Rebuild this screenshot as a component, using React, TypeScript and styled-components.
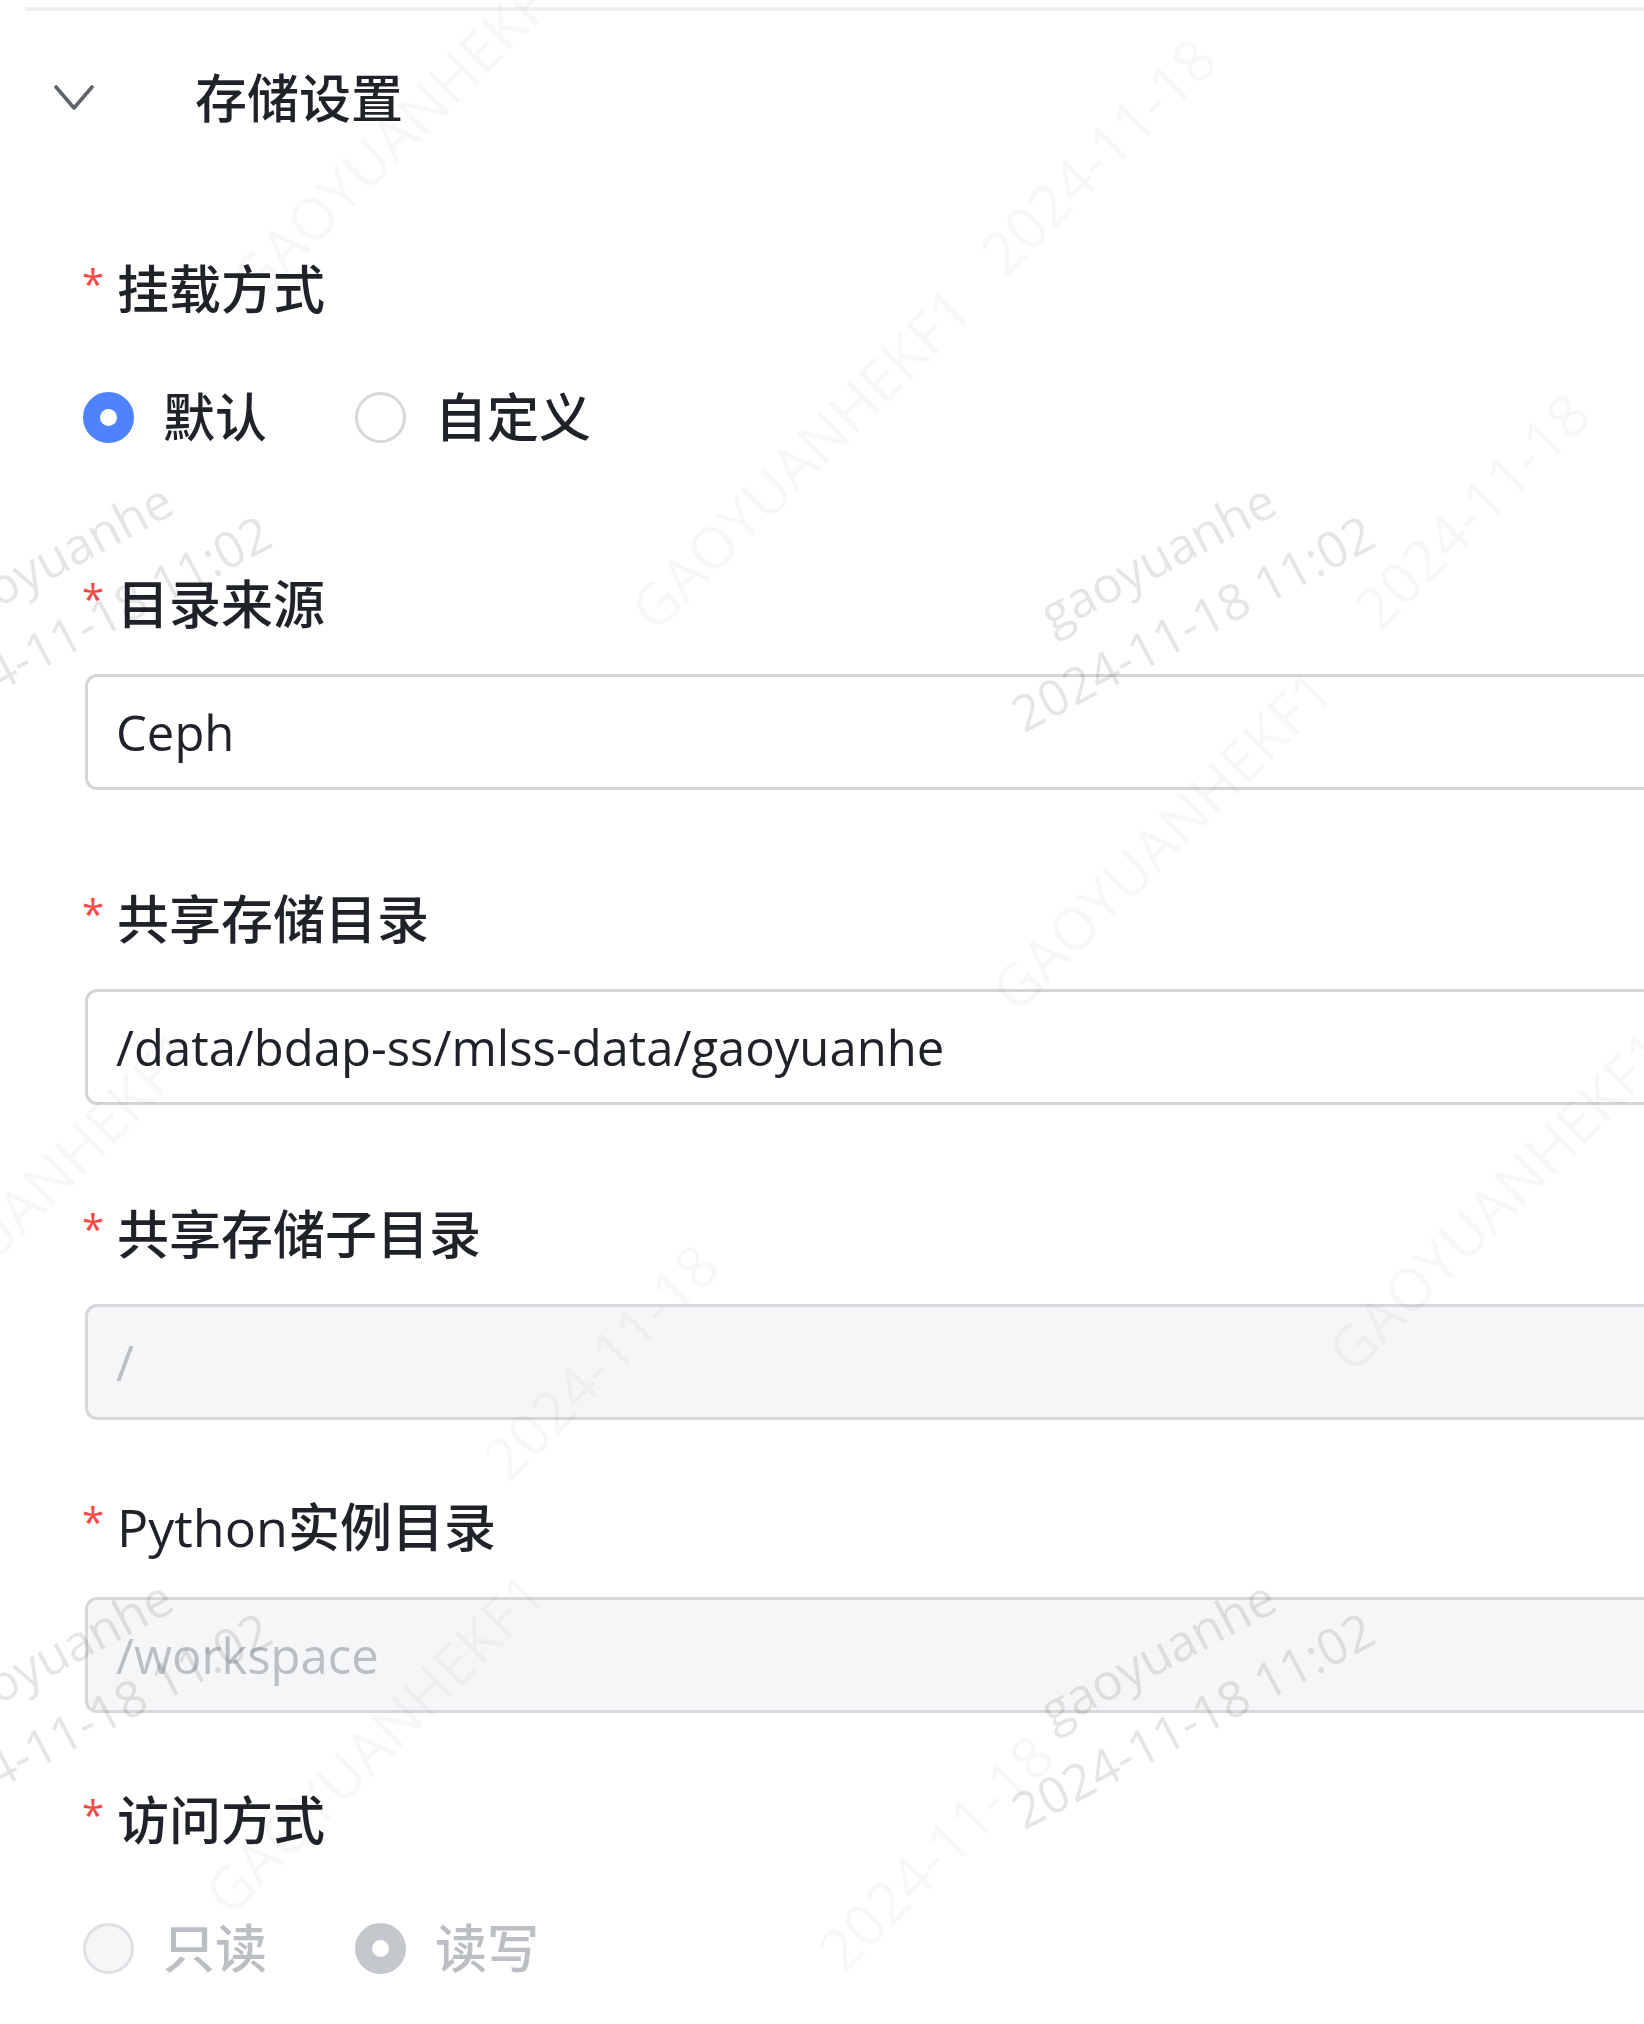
import React from "react";
import styled, { createGlobalStyle } from "styled-components";

const GlobalStyle = createGlobalStyle`
  html, body {
    margin: 0;
    padding: 0;
    background: #ffffff;
  }
  body {
    font-family: "Open Sans", "Noto Sans CJK SC", sans-serif;
    color: #1f2329;
  }
  * {
    box-sizing: border-box;
  }
`;

const Page = styled.div`
  position: relative;
  width: 1644px;
  height: 2024px;
  overflow: hidden;
  background: #ffffff;
`;

const Divider = styled.div`
  margin: 7px 0 0 25px;
  height: 4px;
  background: #eff0f1;
`;

const Header = styled.div`
  display: flex;
  align-items: center;
  height: 174px;
  padding-left: 54px;
  gap: 101px;
`;

const Chevron = styled.svg`
  flex: none;
  width: 40px;
  height: 30px;
`;

const Title = styled.h2`
  margin: 0;
  font-size: 52px;
  line-height: 72px;
  font-weight: 500;
  color: #1f2329;
`;

const Form = styled.div`
  display: flex;
  flex-direction: column;
  padding: 68px 0 0 85px;
`;

const Item = styled.div<{ $after: number }>`
  display: flex;
  flex-direction: column;
  gap: 34px;
  margin-bottom: ${(p) => p.$after}px;
`;

const Label = styled.div`
  display: flex;
  align-items: flex-start;
  height: 72px;
  font-size: 52px;
  line-height: 72px;
  font-weight: 500;
  color: #1f2329;
  white-space: nowrap;
`;

const Required = styled.span`
  flex: none;
  width: 35px;
  margin-top: 11px;
  margin-left: -3px;
  font-size: 40px;
  line-height: 40px;
  font-weight: 400;
  color: #f54a45;
`;

const TextInput = styled.input`
  display: block;
  width: 1620px;
  height: 116px;
  margin: 0;
  padding: 0 0 0 28px;
  border: 3px solid #d3d5d9;
  border-radius: 12px;
  outline: none;
  font-family: "Open Sans", "Noto Sans CJK SC", sans-serif;
  font-size: 49px;
  color: #1f2329;
  background: #ffffff;

  &:disabled {
    background: #f5f6f7;
    color: #bbbfc4;
    -webkit-text-fill-color: #bbbfc4;
    border-color: #d6d8db;
  }
`;

const RadioGroup = styled.div`
  display: flex;
  align-items: center;
  height: 116px;
  gap: 88px;
  margin-left: -2px;
`;

const RadioOption = styled.label<{ $disabled?: boolean }>`
  display: flex;
  align-items: center;
  gap: 29px;
  font-size: 52px;
  line-height: 72px;
  font-weight: 500;
  color: ${(p) => (p.$disabled ? "#bbbfc4" : "#1f2329")};
`;

const RadioDot = styled.span<{ $checked?: boolean; $disabled?: boolean }>`
  flex: none;
  display: flex;
  align-items: center;
  justify-content: center;
  width: 51px;
  height: 51px;
  border-radius: 50%;
  border: 3px solid
    ${(p) =>
      p.$checked
        ? p.$disabled
          ? "#c4c7cb"
          : "#4e83fd"
        : p.$disabled
        ? "#dee0e3"
        : "#d6d8db"};
  background: ${(p) =>
    p.$checked
      ? p.$disabled
        ? "#c4c7cb"
        : "#4e83fd"
      : p.$disabled
      ? "#f5f6f7"
      : "#ffffff"};

  &::after {
    content: "";
    display: ${(p) => (p.$checked ? "block" : "none")};
    width: 17px;
    height: 17px;
    border-radius: 50%;
    background: #ffffff;
  }
`;

const WatermarkLayer = styled.div`
  position: absolute;
  inset: 0;
  pointer-events: none;
  z-index: 2;
  overflow: hidden;
`;

const Mark = styled.div<{ $x: number; $y: number; $angle: number; $size: number; $alpha: number }>`
  position: absolute;
  left: ${(p) => p.$x}px;
  top: ${(p) => p.$y}px;
  transform: translate(-50%, -50%) rotate(${(p) => p.$angle}deg);
  font-family: "Open Sans", "Noto Sans CJK SC", sans-serif;
  font-size: ${(p) => p.$size}px;
  line-height: 1.5;
  text-align: center;
  white-space: pre;
  color: rgba(0, 0, 0, ${(p) => p.$alpha});
`;

type Opt = { label: string; checked?: boolean };

function Radios({ options, disabled }: { options: Opt[]; disabled?: boolean }) {
  return (
    <RadioGroup>
      {options.map((o) => (
        <RadioOption key={o.label} $disabled={disabled}>
          <RadioDot $checked={o.checked} $disabled={disabled} />
          {o.label}
        </RadioOption>
      ))}
    </RadioGroup>
  );
}

const userMarks = [
  { x: 72, y: 590 },
  { x: 1175, y: 590 },
  { x: 72, y: 1687 },
  { x: 1175, y: 1687 },
];

const idMarks = [
  { x: 400, y: 129, t: "GAOYUANHEKF1" },
  { x: 800, y: 458, t: "GAOYUANHEKF1" },
  { x: 1161, y: 839, t: "GAOYUANHEKF1" },
  { x: 1497, y: 1200, t: "GAOYUANHEKF1" },
  { x: 26, y: 1200, t: "GAOYUANHEKF1" },
  { x: 374, y: 1742, t: "GAOYUANHEKF1" },
  { x: 1097, y: 155, t: "2024-11-18" },
  { x: 1471, y: 510, t: "2024-11-18" },
  { x: 600, y: 1361, t: "2024-11-18" },
  { x: 935, y: 1852, t: "2024-11-18" },
];

export default function App() {
  return (
    <Page>
      <GlobalStyle />
      <Divider />
      <Header>
        <Chevron viewBox="0 0 40 30">
          <polyline
            points="2,4 20,25 38,4"
            fill="none"
            stroke="#5f646b"
            strokeWidth="3.6"
            strokeLinecap="round"
            strokeLinejoin="round"
          />
        </Chevron>
        <Title>存储设置</Title>
      </Header>
      <Form>
        <Item $after={93}>
          <Label>
            <Required>*</Required>挂载方式
          </Label>
          <Radios options={[{ label: "默认", checked: true }, { label: "自定义" }]} />
        </Item>
        <Item $after={93}>
          <Label>
            <Required>*</Required>目录来源
          </Label>
          <TextInput readOnly value="Ceph" />
        </Item>
        <Item $after={93}>
          <Label>
            <Required>*</Required>共享存储目录
          </Label>
          <TextInput readOnly value="/data/bdap-ss/mlss-data/gaoyuanhe" />
        </Item>
        <Item $after={71}>
          <Label>
            <Required>*</Required>共享存储子目录
          </Label>
          <TextInput disabled value="/" />
        </Item>
        <Item $after={71}>
          <Label>
            <Required>*</Required>Python实例目录
          </Label>
          <TextInput disabled value="/workspace" />
        </Item>
        <Item $after={0}>
          <Label>
            <Required>*</Required>访问方式
          </Label>
          <Radios disabled options={[{ label: "只读" }, { label: "读写", checked: true }]} />
        </Item>
      </Form>
      <WatermarkLayer>
        {userMarks.map((m, i) => (
          <Mark key={"u" + i} $x={m.x} $y={m.y} $angle={-28} $size={50} $alpha={0.1}>
            {"gaoyuanhe\n2024-11-18 11:02"}
          </Mark>
        ))}
        {idMarks.map((m, i) => (
          <Mark key={"i" + i} $x={m.x} $y={m.y} $angle={-45} $size={58} $alpha={0.03}>
            {m.t}
          </Mark>
        ))}
      </WatermarkLayer>
    </Page>
  );
}
